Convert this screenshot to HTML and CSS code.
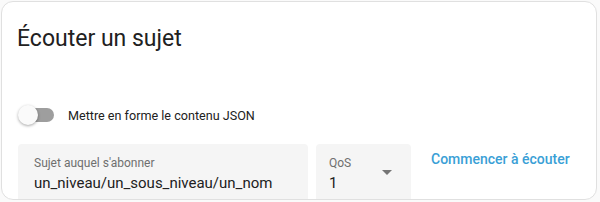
FILE: index.html
```html
<!DOCTYPE html>
<html lang="fr">
<head>
	<meta charset="UTF-8" />
	<meta name="viewport" content="width=device-width, initial-scale=1.0"/>
	<title>Écouter un sujet</title>
	<link rel="stylesheet" href="styles.css">
</head>
<body>
<div class="card">
	<h1 class="card-header">Écouter un sujet</h1>
	<div class="card-content">
		<label class="formfield">
			<span class="switch">
				<span class="switch-track"></span>
				<span class="switch-thumb"></span>
			</span>
			<span class="formfield-label">Mettre en forme le contenu JSON</span>
		</label>
		<div class="panel-row">
			<div class="field topic-field">
				<span class="field-label">Sujet auquel s'abonner</span>
				<span class="field-value">un_niveau/un_sous_niveau/un_nom</span>
			</div>
			<div class="field qos-field">
				<span class="field-label">QoS</span>
				<span class="field-value">1</span>
				<svg class="dropdown-icon" width="10" height="5" viewBox="0 0 10 5">
					<path d="M0 0 L10 0 L5 5 Z" fill="#757575"/>
				</svg>
			</div>
			<button class="text-button">Commencer à écouter</button>
		</div>
	</div>
</div>
</body>
</html>
```

FILE: styles.css
```css
html, body {
	margin: 0;
	background: #fafafa;
	font-family: Roboto, "Noto Sans", sans-serif;
	color: #212121;
}
body {
	padding: 1px 3px 0 1px;
}
.card {
	height: 197px;
	background: #fff;
	border: 1px solid #e0e0e0;
	border-radius: 12px;
	overflow: hidden;
}
.card-header {
	margin: 0;
	padding: 21px 16px 0 15px;
	font-size: 23px;
	font-weight: 400;
	line-height: 32px;
}
.card-content {
	padding: 0 16px;
}
.formfield {
	display: flex;
	align-items: center;
	margin-top: 50px;
	height: 20px;
}
.switch {
	position: relative;
	flex-shrink: 0;
	width: 36px;
	height: 20px;
}
.switch-track {
	position: absolute;
	left: 2px;
	top: 3px;
	width: 34px;
	height: 14px;
	border-radius: 7px;
	background: #9e9e9e;
}
.switch-thumb {
	position: absolute;
	left: 0;
	top: 0;
	width: 20px;
	height: 20px;
	border-radius: 50%;
	background: #fafafa;
	box-shadow: 0 1px 3px rgba(0, 0, 0, 0.35);
}
.formfield-label {
	margin-left: 14px;
	font-size: 12.6px;
	color: #212121;
}
.panel-row {
	display: flex;
	align-items: flex-start;
	margin-top: 19px;
	gap: 8px;
}
.field {
	position: relative;
	flex-shrink: 0;
	display: flex;
	flex-direction: column;
	box-sizing: border-box;
	height: 56px;
	padding: 11px 16px 0;
	background: #f5f5f5;
	border-radius: 4px 4px 0 0;
	border-bottom: 1px solid #9e9e9e;
}
.topic-field {
	width: 290px;
}
.qos-field {
	width: 95px;
	padding-left: 13px;
}
.field-label {
	font-size: 12px;
	line-height: 16px;
	color: #6f6f6f;
}
.field-value {
	font-size: 15px;
	line-height: 24px;
	color: #212121;
}
.dropdown-icon {
	position: absolute;
	right: 19px;
	top: 26px;
}
.text-button {
	flex-shrink: 0;
	margin-left: 4px;
	padding: 5px 8px;
	border: none;
	background: none;
	font-family: Roboto, "Noto Sans", sans-serif;
	font-size: 14px;
	font-weight: 500;
	white-space: nowrap;
	color: #3a9fd6;
	line-height: 20px;
	cursor: pointer;
}
```
